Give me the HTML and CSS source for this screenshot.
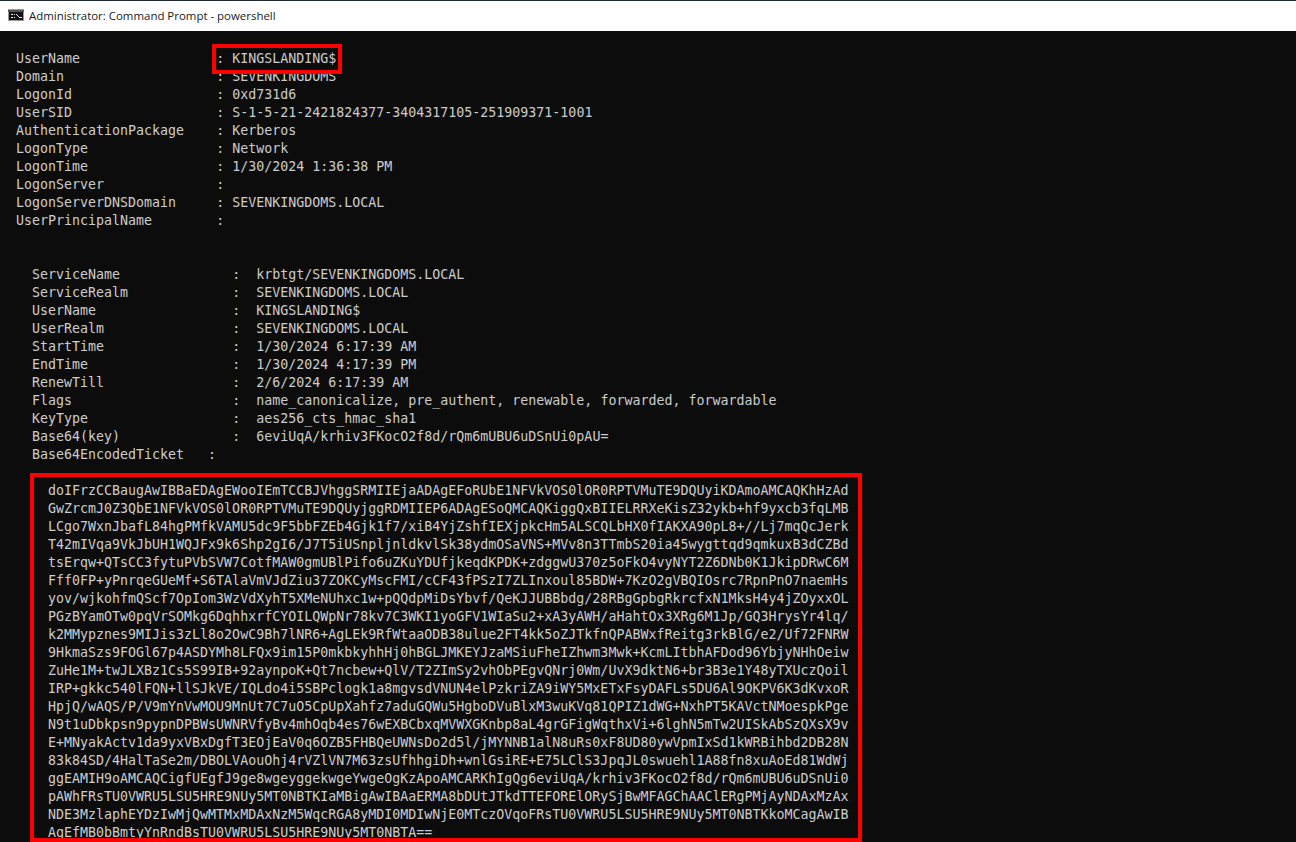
FILE: index.html
```html
<!DOCTYPE html>
<html lang="en">
<head>
<meta charset="utf-8">
<title>Administrator: Command Prompt - powershell</title>
<link rel="stylesheet" href="styles.css">
</head>
<body>
<div class="window">
<header class="titlebar">
<svg class="cmd-icon" width="16" height="12" viewBox="0 0 16 12" shape-rendering="crispEdges"><rect width="16" height="12" fill="#9a9a9a"/><rect y="1" width="16" height="2" fill="#555"/><rect x="1" y="3" width="14" height="8" fill="#111"/><path d="M3 5h2v1H3v2h2v1H3zM6 5h1v1H6zM6 8h1v1H6zM8 5h1v1h1v1h1v1h1v1h-1v-1h-1v-1H9V6H8zM12 8h2v1h-2z" fill="#f0f0f0"/></svg>
<span class="title">Administrator: Command Prompt - powershell</span>
</header>
<main class="console">
<pre class="session">UserName                 : KINGSLANDING$
Domain                   : SEVENKINGDOMS
LogonId                  : 0xd731d6
UserSID                  : S-1-5-21-2421824377-3404317105-251909371-1001
AuthenticationPackage    : Kerberos
LogonType                : Network
LogonTime                : 1/30/2024 1:36:38 PM
LogonServer              :
LogonServerDNSDomain     : SEVENKINGDOMS.LOCAL
UserPrincipalName        :</pre>
<pre class="ticket">ServiceName              :  krbtgt/SEVENKINGDOMS.LOCAL
ServiceRealm             :  SEVENKINGDOMS.LOCAL
UserName                 :  KINGSLANDING$
UserRealm                :  SEVENKINGDOMS.LOCAL
StartTime                :  1/30/2024 6:17:39 AM
EndTime                  :  1/30/2024 4:17:39 PM
RenewTill                :  2/6/2024 6:17:39 AM
Flags                    :  name_canonicalize, pre_authent, renewable, forwarded, forwardable
KeyType                  :  aes256_cts_hmac_sha1
Base64(key)              :  6eviUqA/krhiv3FKocO2f8d/rQm6mUBU6uDSnUi0pAU=
Base64EncodedTicket   :</pre>
<pre class="blob">doIFrzCCBaugAwIBBaEDAgEWooIEmTCCBJVhggSRMIIEjaADAgEFoRUbE1NFVkVOS0lOR0RPTVMuTE9DQUyiKDAmoAMCAQKhHzAd
GwZrcmJ0Z3QbE1NFVkVOS0lOR0RPTVMuTE9DQUyjggRDMIIEP6ADAgESoQMCAQKiggQxBIIELRRXeKisZ32ykb+hf9yxcb3fqLMB
LCgo7WxnJbafL84hgPMfkVAMU5dc9F5bbFZEb4Gjk1f7/xiB4YjZshfIEXjpkcHm5ALSCQLbHX0fIAKXA90pL8+//Lj7mqQcJerk
T42mIVqa9VkJbUH1WQJFx9k6Shp2gI6/J7T5iUSnpljnldkvlSk38ydmOSaVNS+MVv8n3TTmbS20ia45wygttqd9qmkuxB3dCZBd
tsErqw+QTsCC3fytuPVbSVW7CotfMAW0gmUBlPifo6uZKuYDUfjkeqdKPDK+zdggwU370z5oFkO4vyNYT2Z6DNb0K1JkipDRwC6M
Fff0FP+yPnrqeGUeMf+S6TAlaVmVJdZiu37ZOKCyMscFMI/cCF43fPSzI7ZLInxoul85BDW+7KzO2gVBQIOsrc7RpnPnO7naemHs
yov/wjkohfmQScf7OpIom3WzVdXyhT5XMeNUhxc1w+pQQdpMiDsYbvf/QeKJJUBBbdg/28RBgGpbgRkrcfxN1MksH4y4jZOyxxOL
PGzBYamOTw0pqVrSOMkg6DqhhxrfCYOILQWpNr78kv7C3WKI1yoGFV1WIaSu2+xA3yAWH/aHahtOx3XRg6M1Jp/GQ3HrysYr4lq/
k2MMypznes9MIJis3zLl8o2OwC9Bh7lNR6+AgLEk9RfWtaaODB38ulue2FT4kk5oZJTkfnQPABWxfReitg3rkBlG/e2/Uf72FNRW
9HkmaSzs9FOGl67p4ASDYMh8LFQx9im15P0mkbkyhhHj0hBGLJMKEYJzaMSiuFheIZhwm3Mwk+KcmLItbhAFDod96YbjyNHhOeiw
ZuHe1M+twJLXBz1Cs5S99IB+92aynpoK+Qt7ncbew+QlV/T2ZImSy2vhObPEgvQNrj0Wm/UvX9dktN6+br3B3e1Y48yTXUczQoil
IRP+gkkc540lFQN+llSJkVE/IQLdo4i5SBPclogk1a8mgvsdVNUN4elPzkriZA9iWY5MxETxFsyDAFLs5DU6Al9OKPV6K3dKvxoR
HpjQ/wAQS/P/V9mYnVwMOU9MnUt7C7uO5CpUpXahfz7aduGQWu5HgboDVuBlxM3wuKVq81QPIZ1dWG+NxhPT5KAVctNMoespkPge
N9t1uDbkpsn9pypnDPBWsUWNRVfyBv4mhOqb4es76wEXBCbxqMVWXGKnbp8aL4grGFigWqthxVi+6lghN5mTw2UISkAbSzQXsX9v
E+MNyakActv1da9yxVBxDgfT3EOjEaV0q6OZB5FHBQeUWNsDo2d5l/jMYNNB1alN8uRs0xF8UD80ywVpmIxSd1kWRBihbd2DB28N
83k84SD/4HalTaSe2m/DBOLVAouOhj4rVZlVN7M63zsUfhhgiDh+wnlGsiRE+E75LClS3JpqJL0swuehl1A88fn8xuAoEd81WdWj
ggEAMIH9oAMCAQCigfUEgfJ9ge8wgeyggekwgeYwgeOgKzApoAMCARKhIgQg6eviUqA/krhiv3FKocO2f8d/rQm6mUBU6uDSnUi0
pAWhFRsTU0VWRU5LSU5HRE9NUy5MT0NBTKIaMBigAwIBAaERMA8bDUtJTkdTTEFORElORySjBwMFAGChAAClERgPMjAyNDAxMzAx
NDE3MzlaphEYDzIwMjQwMTMxMDAxNzM5WqcRGA8yMDI0MDIwNjE0MTczOVqoFRsTU0VWRU5LSU5HRE9NUy5MT0NBTKkoMCagAwIB
AqEfMB0bBmtyYnRndBsTU0VWRU5LSU5HRE9NUy5MT0NBTA==</pre>
<div class="mark mark-user"></div>
<div class="mark mark-ticket"></div>
</main>
</div>
</body>
</html>
```
FILE: styles.css
```css
* { box-sizing: border-box; }
html, body { margin: 0; padding: 0; height: 100%; overflow: hidden; background: #0c0c0c; }
.window { display: flex; flex-direction: column; height: 842px; width: 1296px; }
.titlebar {
  flex: none;
  height: 31px;
  display: flex;
  align-items: center;
  gap: 5px;
  padding: 0 0 2px 8px;
  background: #fff;
  border-top: 1px solid #1d2a33;
}
.cmd-icon { flex: none; }
.title { font-family: "Open Sans", "Noto Sans", sans-serif; font-size: 11.45px; color: #1a1a1a; white-space: nowrap; }
.console { position: relative; flex: 1; background: #0c0c0c; padding: 19px 0 0 16px; overflow: hidden; }
pre {
  margin: 0;
  font-family: "DejaVu Sans Mono", monospace;
  font-size: 13.3px;
  line-height: 18px;
  color: #cccccc;
  white-space: pre;
}
.ticket { margin: 36px 0 0 16px; }
.blob { margin: 18px 0 0 32px; }
.mark { position: absolute; border: 4px solid #ff0000; }
.mark-user { left: 212px; top: 13px; width: 130px; height: 30px; }
.mark-ticket { left: 30px; top: 442px; width: 832px; height: 369px; }
```
